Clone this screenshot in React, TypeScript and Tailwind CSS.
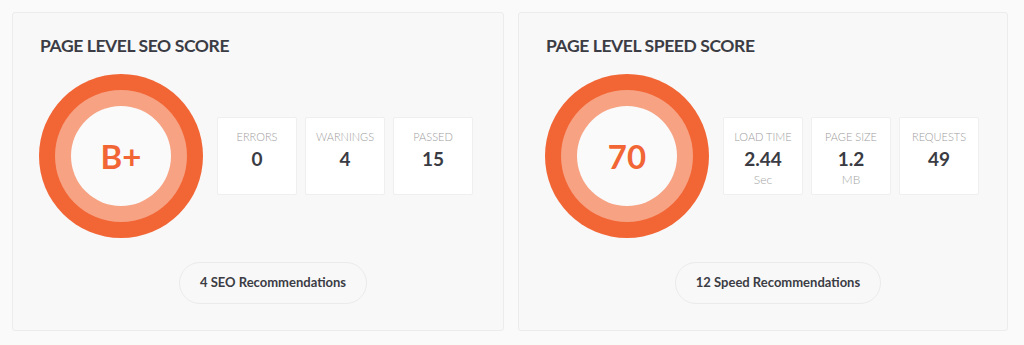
const font = { fontFamily: "Lato, 'Open Sans', sans-serif" };

type Stat = { label: string; value: string; unit?: string };

const seoStats: Stat[] = [
  { label: "ERRORS", value: "0" },
  { label: "WARNINGS", value: "4" },
  { label: "PASSED", value: "15" },
];

const speedStats: Stat[] = [
  { label: "LOAD TIME", value: "2.44", unit: "Sec" },
  { label: "PAGE SIZE", value: "1.2", unit: "MB" },
  { label: "REQUESTS", value: "49" },
];

const ScoreRing = ({ score }: { score: string }) => (
  <div className="h-[164px] w-[164px] shrink-0 rounded-full bg-[#f26535] p-[16px]">
    <div className="h-full w-full rounded-full bg-[#f7a283] p-[16px]">
      <div className="flex h-full w-full items-center justify-center rounded-full bg-[#fafafa]">
        <span className="text-[33px] font-bold leading-none text-[#f26535]">
          {score}
        </span>
      </div>
    </div>
  </div>
);

const StatBox = ({ stat }: { stat: Stat }) => (
  <div className="flex h-[78px] w-[80px] flex-col items-center rounded-[2px] border border-[#efefef] bg-white pt-[12px]">
    <div className="text-[11px] font-light leading-[13px] text-[#9d9d9d]">
      {stat.label}
    </div>
    <div className="mt-[5px] text-[19px] font-bold leading-[22px] text-[#3a3b43]">
      {stat.value}
    </div>
    {stat.unit && (
      <div className="mt-[2px] text-[12px] font-light leading-[16px] text-[#a3a3a3]">
        {stat.unit}
      </div>
    )}
  </div>
);

type CardProps = {
  title: string;
  score: string;
  stats: Stat[];
  button: string;
  width: string;
};

const ScoreCard = ({ title, score, stats, button, width }: CardProps) => (
  <div
    className={`${width} h-[319px] rounded-[3px] border border-[#ececec] bg-[#f8f8f8] pl-[26px] pt-[22px]`}
  >
    <h2 className="pl-[1px] text-[17.5px] font-bold leading-[22px] tracking-[-0.4px] text-[#3b3c44]">
      {title}
    </h2>
    <div className="mt-[17px] flex items-center">
      <ScoreRing score={score} />
      <div className="ml-[14px] flex gap-2">
        {stats.map((s) => (
          <StatBox key={s.label} stat={s} />
        ))}
      </div>
    </div>
    <div className="mt-[24px] flex justify-center pl-[4px]">
      <button className="h-[42px] rounded-full border border-[#ebebeb] bg-[#f8f8f8] px-[20px] text-[13px] font-bold text-[#3b3c44]">
        {button}
      </button>
    </div>
  </div>
);

export default function App() {
  return (
    <div
      className="flex h-[345px] w-[1024px] gap-[14px] bg-[#fafafa] pl-[12px] pt-[12px]"
      style={font}
    >
      <ScoreCard
        title="PAGE LEVEL SEO SCORE"
        score="B+"
        stats={seoStats}
        button="4 SEO Recommendations"
        width="w-[492px]"
      />
      <ScoreCard
        title="PAGE LEVEL SPEED SCORE"
        score="70"
        stats={speedStats}
        button="12 Speed Recommendations"
        width="w-[490px]"
      />
    </div>
  );
}
